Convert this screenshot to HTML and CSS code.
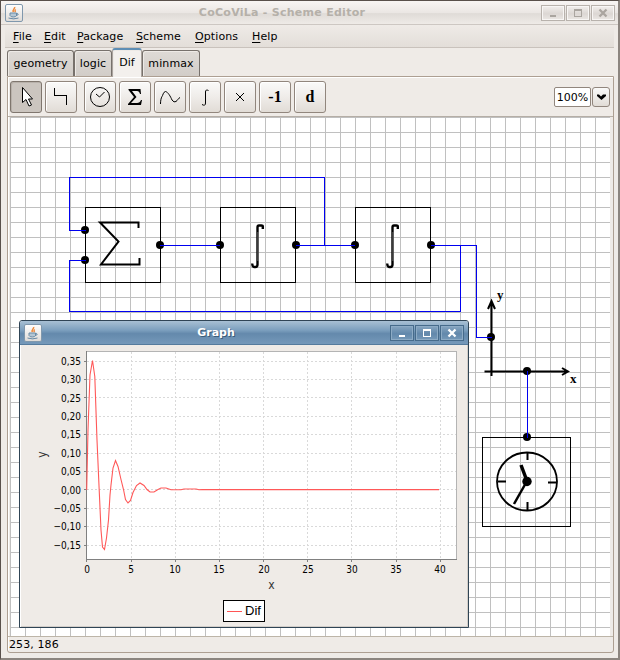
FILE: index.html
```html
<!DOCTYPE html>
<html lang="en">
<head>
<meta charset="utf-8">
<title>CoCoViLa - Scheme Editor</title>
<link rel="stylesheet" href="styles.css">
</head>
<body>
<svg class="defs" width="0" height="0">
  <defs>
    <linearGradient id="face" x1="0" y1="0" x2="0" y2="1"><stop offset="0" stop-color="#ffffff"/><stop offset="1" stop-color="#dedad6"/></linearGradient>
    <symbol id="java" viewBox="0 0 18 18">
      <rect x=".5" y=".5" width="17" height="17" rx="1.5" fill="url(#face)" stroke="#8098ad"/>
      <path d="M9.600 3c.8 1.600-2.600 2.500-1.200 5M10.700 5.500c-1.300 1-.8 1.500-.3 2.800" fill="none" stroke="#ee8a3c" stroke-width="1.500"/>
      <path d="M5 9h6.500v2.500q-.5 1.500-3.200 1.500T5 11.500zM11.500 9.500c2.500-.5 2 2-.5 2.200M3.500 14q5 1.800 10 0" fill="#b4c6d4" stroke="#6b8ba5" stroke-width="1"/>
    </symbol>
    <symbol id="min" viewBox="0 0 24 16"><path d="M9 10h6v2H9z" fill="currentColor"/></symbol>
    <symbol id="max" viewBox="0 0 24 16"><path d="M8 4h8v8H8zM9 6v5h6V6z" fill="currentColor" fill-rule="evenodd"/></symbol>
    <symbol id="close" viewBox="0 0 24 16"><path d="M8.500 4.500l7 7m0-7l-7 7" stroke="currentColor" stroke-width="2.300"/></symbol>
  </defs>
</svg>
<div class="app">
  <header class="titlebar">
    <svg class="java"><use href="#java"/></svg>
    <h1>CoCoViLa - Scheme Editor</h1>
    <div class="controls">
      <button><svg><use href="#min"/></svg></button>
      <button><svg><use href="#max"/></svg></button>
      <button><svg><use href="#close"/></svg></button>
    </div>
  </header>
  <nav class="menu">
    <span><u>F</u>ile</span><span><u>E</u>dit</span><span><u>P</u>ackage</span><span><u>S</u>cheme</span><span><u>O</u>ptions</span><span><u>H</u>elp</span>
  </nav>
  <div class="tabs">
    <div class="tab geometry">geometry</div><div class="tab logic">logic</div><div class="tab dif active">Dif</div><div class="tab minmax">minmax</div>
  </div>
  <main class="panel">
    <div class="toolbar">
      <button class="tool pressed"><svg viewBox="0 0 32 32"><path d="M12.500 6.500v15l3.500-3 3 6.500 2.500-1-3-6h4z" fill="#fff" stroke="#000"/></svg></button>
      <button class="tool gap"><svg viewBox="0 0 32 32" class="crisp"><path d="M9.500 7v7.500h12V24"/></svg></button>
      <button class="tool"><svg viewBox="0 0 32 32"><circle cx="16" cy="16" r="9.500"/><path d="M12 13l3.500 3 5-5"/></svg></button>
      <button class="tool"><svg viewBox="0 0 32 32"><path d="M9.500 8h12l.5 5h-1q-.7-3-3-3h-5l4.500 6-5.500 6h6q3 0 4-3h1l-1 5H9v-1l6-7-5.500-7z" fill="#000" stroke="none"/></svg></button>
      <button class="tool"><svg viewBox="0 0 32 32"><path d="M6.500 23c0-3 .5-6 1.500-7.500 1-1 1-4.500 3.500-5 2.500.5 5 5 6.500 8.500q2 3 4 1.500c1.500-1 2-3 4-4"/></svg></button>
      <button class="tool"><svg viewBox="0 0 32 32"><path d="M19.500 9.500q-3-1.500-3 1.500v11q0 3.500-3.500 1.500"/></svg></button>
      <button class="tool"><svg viewBox="0 0 32 32"><path d="M12 12l8 8m0-8l-8 8"/></svg></button>
      <button class="tool glyph">-1</button>
      <button class="tool glyph">d</button>
      <div class="zoom"><span>100%</span><button><svg viewBox="0 0 18 20"><path d="M5 7.500h2l2 2 2-2h3v1.500l-4.500 4L5 9z"/></svg></button></div>
    </div>
    <div class="canvas">
      <svg class="scheme" viewBox="10 117 600 519" width="600" height="519">
        <defs><pattern id="grid" x="10" y="117" width="15" height="15" patternUnits="userSpaceOnUse"><path d="M0 .5h15M.5 0v15" stroke="#c0c0c0" shape-rendering="crispEdges"/></pattern></defs>
        <rect x="10" y="117" width="600" height="519" fill="url(#grid)"/>
        <g fill="none" stroke="#000" shape-rendering="crispEdges">
          <path d="M85.500 207.500h75v75h-75zM220.500 207.500h75v75h-75zM355.500 207.500h75v75h-75zM482.500 437.500h88v89h-88z"/>
        </g>
        <g><circle cx="85" cy="230" r="4"/><circle cx="85" cy="260" r="4"/><circle cx="160" cy="245" r="4"/><circle cx="220" cy="245" r="4"/><circle cx="296" cy="245" r="4"/><circle cx="355" cy="245" r="4"/><circle cx="431" cy="245" r="4"/><circle cx="491" cy="337" r="4"/><circle cx="527" cy="371" r="4"/><circle cx="527" cy="437" r="4"/></g>
        <g fill="none" stroke="#000" stroke-width="2">
          <path d="M138.500 228v-5.500H100l18.500 19L101 264.500h38.500V258"/>
          <g id="integral">
            <path d="M262.800 229v-2.500q0-1-1.500-1H259q-1.500 0-1.500 2v37q0 2.500-2 2.500h-1.500q-1.500 0-1.800-3.500" stroke-width="2.400"/>
            <path d="M258 232v29" stroke="#777" stroke-width="1"/>
          </g>
          <use href="#integral" x="135"/>
          <path d="M491.500 376v-75M488 309l3.500-8 3.500 8M484.500 371.500H568M562 368l6 3.500-6 3.500"/>
          <ellipse cx="527" cy="481.500" rx="30" ry="29" stroke-width="1.800"/>
          <path d="M527.500 452v8M527.500 502v9M498 481.500h8M548 482.500h9"/>
          <path d="M527 481l-6-16" stroke-width="3.500"/><path d="M527 481l-13 23" stroke-width="2.500"/>
        </g>
        <circle cx="527" cy="481.500" r="4.700"/>
        <g fill="none" stroke="#0000f0" shape-rendering="crispEdges">
          <path d="M86 230.500H69.500v-53h255v68M86 260.500H69.500v51h391v-66M160 245.500h60M296 245.500h59M431 245.500h45.500v92H492M527.500 371v67"/>
        </g>
        <text class="axis" x="497" y="299">y</text><text class="axis" x="570" y="383">x</text>
      </svg>
      <section class="dialog">
        <header>
          <svg class="java"><use href="#java"/></svg>
          <h2>Graph</h2>
          <div class="controls">
            <button><svg><use href="#min"/></svg></button>
            <button><svg><use href="#max"/></svg></button>
            <button><svg><use href="#close"/></svg></button>
          </div>
        </header>
        <svg class="chart" viewBox="21 345 446 281" width="446" height="281">
          <rect x="86" y="351" width="371" height="209" fill="#fff"/>
          <g fill="none" shape-rendering="crispEdges">
            <path stroke="#d9d9d9" stroke-dasharray="2 2" d="M87 361.500h369M87 379.500h369M87 397.500h369M87 416.500h369M87 434.500h369M87 453.500h369M87 471.500h369M87 489.500h369M87 508.500h369M87 526.500h369M87 545.500h369M131.500 352v207M175.500 352v207M219.500 352v207M263.500 352v207M307.500 352v207M351.500 352v207M396.500 352v207M440.500 352v207"/>
            <path stroke="#b4b4b4" d="M86 351.500h370.500V559"/>
            <path stroke="#808080" d="M86.500 351v208.500H457M84 361.500h2M84 379.500h2M84 397.500h2M84 416.500h2M84 434.500h2M84 453.500h2M84 471.500h2M84 489.500h2M84 508.500h2M84 526.500h2M84 545.500h2M86.500 560v2M131.500 560v2M175.500 560v2M219.500 560v2M263.500 560v2M307.500 560v2M351.500 560v2M396.500 560v2M440.500 560v2"/>
          </g>
          <path fill="none" stroke="#ff5858" stroke-width="1.100" d="M86.700 490L88 430l2-55 2.500-14.500 2.300 16L97 440l2.200 50 1.800 40 1.500 17 2 2.500 2-11.500 2-18 1.500-25 1-10 2-17 2.500-7.500 2.500 6 3 13 2.500 10 2 10 2.500 3.500 2.500-2.500 2.500-8 3.500-7 3.500-2.500 4 2.500 3 4 3 2.500h4l4-2.500 3-1.500h5l5 1.800h10l3-.8h12l3 .8 3-.3 2 .1h235"/>
          <g class="ticks" text-anchor="end"><text x="81" y="365">0,35</text><text x="81" y="383">0,30</text><text x="81" y="402">0,25</text><text x="81" y="420">0,20</text><text x="81" y="438">0,15</text><text x="81" y="457">0,10</text><text x="81" y="475">0,05</text><text x="81" y="494">0,00</text><text x="81" y="512">−0,05</text><text x="81" y="530">−0,10</text><text x="81" y="549">−0,15</text></g>
          <g class="ticks" text-anchor="middle"><text x="87" y="573">0</text><text x="131" y="573">5</text><text x="175" y="573">10</text><text x="219" y="573">15</text><text x="264" y="573">20</text><text x="308" y="573">25</text><text x="352" y="573">30</text><text x="396" y="573">35</text><text x="440" y="573">40</text></g>
          <text class="label" x="271.500" y="589" text-anchor="middle">x</text>
          <text class="label" transform="translate(46 454.500) rotate(-90)" text-anchor="middle">y</text>
          <rect x="223.500" y="600.500" width="41" height="21" fill="#fff" stroke="#000"/>
          <path d="M227 611.500h15" stroke="#ff5555"/>
          <text class="legend" x="245" y="615">Dif</text>
        </svg>
      </section>
    </div>
    <footer>253, 186</footer>
  </main>
</div>
</body>
</html>
```
FILE: styles.css
```css
* { box-sizing: border-box; }
body { margin: 0; font: 11px/14px "DejaVu Sans", sans-serif; color: #000; background: #efebe7; }
button { padding: 0; margin: 0; font: inherit; }
.defs { position: absolute; }
.app { width: 620px; height: 660px; display: flex; flex-direction: column; overflow: hidden; background: #efebe7; border: 1px solid #59504b; border-right: 2px solid #8c857f; border-bottom: 2px solid #8c857f; }
.titlebar { height: 24px; flex: none; display: flex; align-items: center; padding: 0 3px 0 4px; background: linear-gradient(#f8f5f3, #ebe7e4 50%, #dfdbd7 55%, #efebe7); border-bottom: 1px solid #cdc7c2; }
.java { width: 18px; height: 18px; flex: none; display: block; }
h1, h2 { flex: 1; margin: 0; font-size: 11px; line-height: 14px; text-align: center; }
h1 { color: #b5b0a9; letter-spacing: .27px; }
.controls { display: flex; gap: 1px; }
.controls button { width: 24px; height: 16px; border: 0; background: linear-gradient(#f5f2f0, #dcd7d3 55%, #eeeae7); box-shadow: inset 0 0 0 1px #b8b2ac, inset 0 0 0 2px #f8f6f4; color: #aaa59f; }
.controls svg { display: block; width: 24px; height: 16px; }
.menu { height: 23px; flex: none; display: grid; grid-template-columns: 31px 33px 59px 59px 57px auto; margin: 0 4px; padding: 5px 8px 3px; letter-spacing: .1px; background: linear-gradient(#efebe7, #e3ded9); border-bottom: 1px solid #c9c2bc; }
.menu u { text-underline-offset: 2px; }
.tabs { height: 28px; flex: none; display: flex; align-items: flex-end; padding-left: 6px; letter-spacing: .1px; }
.tab { height: 26px; padding-top: 6px; text-align: center; border: 1px solid #77716c; border-bottom: 0; border-radius: 3px 3px 0 0; background: linear-gradient(#dedad6, #d2cdc8); box-shadow: inset 1px 1px #eeeae6; }
.geometry { width: 67px; }
.logic { width: 38px; }
.minmax { width: 58px; }
.tab.active { position: relative; width: 30px; height: 29px; margin-bottom: -1px; border: 1px solid #aaa49f; border-top: 2px solid #5e8eb5; border-bottom: 0; background: #f3f0ed; }
.panel { height: 577px; flex: none; margin: 0 4px 0 6px; border: 1px solid #ad9f92; border-radius: 0 0 3px 3px; display: flex; flex-direction: column; box-shadow: inset 1px 1px #fff; }
.toolbar { height: 40px; flex: none; display: flex; gap: 3px; padding: 4px 3px 4px 2px; border-bottom: 1px solid #b5aea6; }
.tool { width: 32px; height: 32px; flex: none; border: 1px solid #91867d; border-radius: 3px; background: linear-gradient(#fafaf9, #efece9 50%, #e1dcd6); box-shadow: inset 1px 1px #fff; }
.tool svg { display: block; width: 32px; height: 32px; margin: -1px; fill: none; stroke: #000; stroke-width: 1; }
.tool .crisp { shape-rendering: crispEdges; }
.pressed { background: #cbc5bf; border-color: #7f766e; box-shadow: inset 1px 1px #b8b1aa; }
.gap { margin-right: 4px; }
.glyph { font: bold 16px/28px "Liberation Serif", serif; color: #000; }
.zoom { margin: 6px 0 0 auto; display: flex; gap: 1px; height: 20px; }
.zoom span { width: 37px; border: 1px solid #91867d; border-radius: 2px; background: #fff; text-align: center; line-height: 19px; }
.zoom button { width: 18px; border: 1px solid #91867d; border-radius: 3px; background: linear-gradient(#fafaf9, #e1dcd6); }
.zoom svg { display: block; width: 18px; height: 20px; margin: -1px; }
.canvas { position: relative; height: 519px; width: 600px; margin-left: 2px; flex: none; background: #fff; }
.scheme { display: block; }
.axis { font: bold 13px "Liberation Serif", serif; }
.dialog { position: absolute; left: 9px; top: 203px; width: 450px; height: 308px; border: 1px solid #2f4455; border-radius: 3px 3px 0 0; background: #efebe7; box-shadow: inset 1px 0 #fff, inset -1px -1px #d2cdc8; }
.dialog header { height: 24px; display: flex; align-items: center; padding: 0 4px; background: linear-gradient(#a8c0d4, #7c9fbe 40%, #6489ac 55%, #7599ba); border-bottom: 1px solid #557b9d; border-radius: 2px 2px 0 0; }
h2 { color: #fff; text-shadow: 1px 1px #3c5d79; }
.dialog .controls button { background: linear-gradient(#8caac4, #6288ab 55%, #799cbb); box-shadow: inset 0 0 0 1px #466b8b, inset 0 0 0 2px #8dabc5; color: #fff; }
.chart { display: block; margin-left: 1px; }
.ticks { font: 10px "DejaVu Sans Condensed", "DejaVu Sans", sans-serif; font-stretch: condensed; }
.label { font: 12px "DejaVu Sans Condensed", "DejaVu Sans", sans-serif; font-stretch: condensed; fill: #333; }
.legend { font: 13px "Liberation Sans", sans-serif; }
footer { flex: 1; border-top: 1px solid #bdb5a8; padding: 0 1px; line-height: 15px; letter-spacing: .1px; }
```
